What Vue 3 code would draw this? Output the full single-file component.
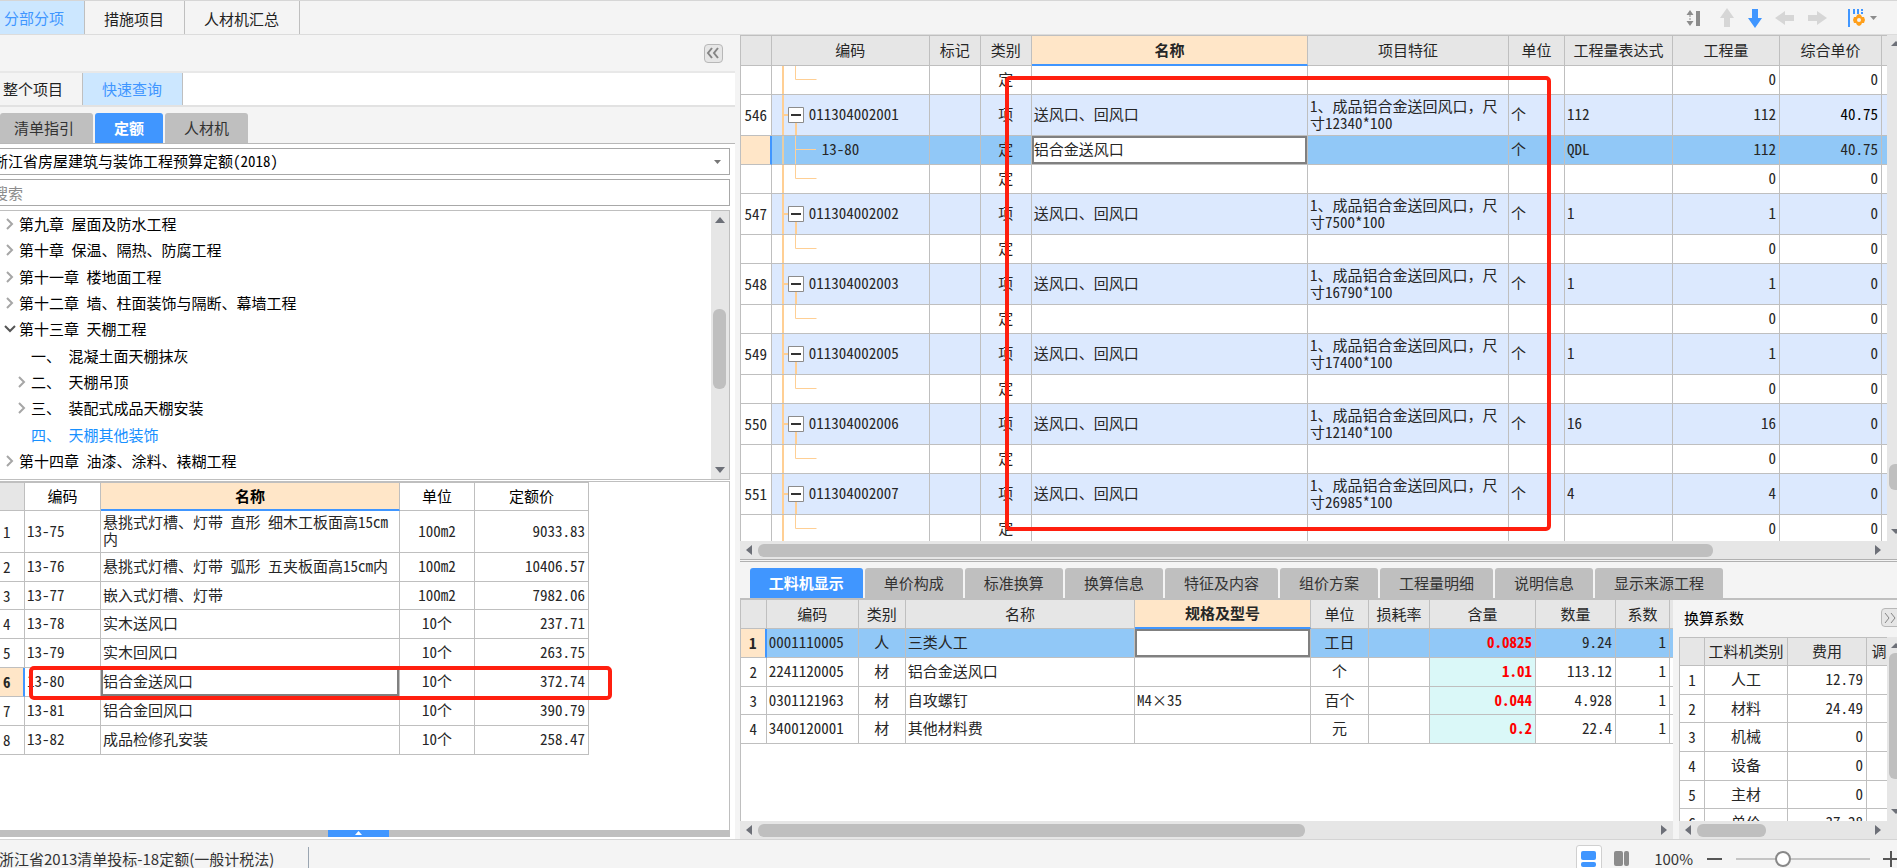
<script setup>
import { ref } from 'vue'

const mainTabs = ['分部分项', '措施项目', '人材机汇总']
const mainTab = ref(0)
const sideTabs = ['整个项目', '快速查询']
const sideTab = ref(1)
const queryTabs = ['清单指引', '定额', '人材机']
const queryTab = ref(1)
const detailTabs = ['工料机显示', '单价构成', '标准换算', '换算信息', '特征及内容', '组价方案', '工程量明细', '说明信息', '显示来源工程']
const detailTab = ref(0)
const keyword = ref('')
const zoom = ref(33)

const tree = [
  { text: '第九章 屋面及防水工程', level: 1, state: 'closed' },
  { text: '第十章 保温、隔热、防腐工程', level: 1, state: 'closed' },
  { text: '第十一章 楼地面工程', level: 1, state: 'closed' },
  { text: '第十二章 墙、柱面装饰与隔断、幕墙工程', level: 1, state: 'closed' },
  { text: '第十三章 天棚工程', level: 1, state: 'open' },
  { text: '一、 混凝土面天棚抹灰', level: 2, state: 'leaf' },
  { text: '二、 天棚吊顶', level: 2, state: 'closed' },
  { text: '三、 装配式成品天棚安装', level: 2, state: 'closed' },
  { text: '四、 天棚其他装饰', level: 2, state: 'leaf', active: true },
  { text: '第十四章 油漆、涂料、裱糊工程', level: 1, state: 'closed' }
]

const quota = [
  ['13-75', '悬挑式灯槽、灯带 直形 细木工板面高15cm内', '100m2', '9033.83'],
  ['13-76', '悬挑式灯槽、灯带 弧形 五夹板面高15cm内', '100m2', '10406.57'],
  ['13-77', '嵌入式灯槽、灯带', '100m2', '7982.06'],
  ['13-78', '实木送风口', '10个', '237.71'],
  ['13-79', '实木回风口', '10个', '263.75'],
  ['13-80', '铝合金送风口', '10个', '372.74'],
  ['13-81', '铝合金回风口', '10个', '390.79'],
  ['13-82', '成品检修孔安装', '10个', '258.47']
]

const item = (no, code, size, qty, price) => ({
  kind: 'item', no, code, type: '项', name: '送风口、回风口',
  feature: '1、成品铝合金送回风口，尺寸' + size, unit: '个', expr: qty, qty, price
})
const blank = () => ({ kind: 'last', type: '定', qty: '0', price: '0' })

const bill = [
  blank(),
  item('546', '011304002001', '12340*100', '112', '40.75'),
  { kind: 'child', code: '13-80', type: '定', name: '铝合金送风口', unit: '个', expr: 'QDL', qty: '112', price: '40.75' },
  blank(),
  item('547', '011304002002', '7500*100', '1', '0'),
  blank(),
  item('548', '011304002003', '16790*100', '1', '0'),
  blank(),
  item('549', '011304002005', '17400*100', '1', '0'),
  blank(),
  item('550', '011304002006', '12140*100', '16', '0'),
  blank(),
  item('551', '011304002007', '26985*100', '4', '0'),
  blank()
]

const resources = [
  ['0001110005', '人', '三类人工', '', '工日', '0.0825', '9.24'],
  ['2241120005', '材', '铝合金送风口', '', '个', '1.01', '113.12'],
  ['0301121963', '材', '自攻螺钉', 'M4×35', '百个', '0.044', '4.928'],
  ['3400120001', '材', '其他材料费', '', '元', '0.2', '22.4']
]

const factors = [
  ['人工', '12.79'], ['材料', '24.49'], ['机械', '0'],
  ['设备', '0'], ['主材', '0'], ['单价', '37.28']
]
</script>

<template>
  <div class="app">
    <header class="topbar">
      <nav class="strip">
        <button v-for="(t, i) in mainTabs" :key="t" type="button" class="strip-tab" :class="{ on: i === mainTab }" @click="mainTab = i">{{ t }}</button>
      </nav>
      <div class="tools">
        <button type="button" aria-label="行高"><svg width="16" height="18"><path d="M4 1 7.500 6H.5zM4 17 .5 12H7.500z" fill="#8c8c8c" /><path d="M4 6v6" stroke="#8c8c8c" stroke-width="1" stroke-dasharray="2 1" /><path d="M10 2h4v15h-4z" fill="#8c8c8c" /></svg></button>
        <button type="button" aria-label="上移"><svg width="16" height="20"><path d="M8 0 15 10h-4v9H5v-9H1z" fill="#d6d6d6" /></svg></button>
        <button type="button" aria-label="下移"><svg width="16" height="20"><path d="M8 20 1 10h4V1h6v9h4z" fill="#4096ff" /></svg></button>
        <button type="button" aria-label="左移"><svg width="20" height="16"><path d="M0 8 10 1v4h9v6h-9v4z" fill="#d6d6d6" /></svg></button>
        <button type="button" aria-label="右移"><svg width="20" height="16"><path d="M20 8 10 1v4H1v6h9v4z" fill="#d6d6d6" /></svg></button>
        <button type="button" aria-label="列设置" class="column-set">
          <svg width="18" height="20"><path d="M1 1h2v18H1zM6 1h2v5H6zM10 1h2v5h-2zM14 1h2v2h-2zM14 4h2v2h-2z" fill="#4096ff" /><path d="m12 6 2 1 1 2h2l1 3-1 3h-2l-1 2-2 1-2-1-1-2H7l-1-3 1-3h2l1-2z" fill="#ff9f1a" /><circle cx="12" cy="12" r="2" fill="#f4f4f4" /></svg>
          <svg width="8" height="6"><path d="M0 1h7L3.500 5z" fill="#8c8c8c" /></svg>
        </button>
      </div>
    </header>

    <main class="body">
      <aside class="side">
        <div class="side-head">
          <button type="button" class="fold" aria-label="收起">
            <svg width="16" height="16"><path d="M7 3 3 8l4 5M13 3 9 8l4 5" fill="none" stroke="#858585" stroke-width="2" /></svg>
          </button>
        </div>
        <nav class="strip side-strip">
          <button v-for="(t, i) in sideTabs" :key="t" type="button" class="strip-tab" :class="{ on: i === sideTab }" @click="sideTab = i">{{ t }}</button>
        </nav>
        <nav class="pills query">
          <button v-for="(t, i) in queryTabs" :key="t" type="button" class="pill" :class="{ on: i === queryTab }" @click="queryTab = i">{{ t }}</button>
        </nav>
        <div class="side-body">
          <div class="combo">
            <select aria-label="定额库"><option>浙江省房屋建筑与装饰工程预算定额(2018)</option></select>
            <svg width="8" height="6"><path d="M0 1h7L3.500 5z" fill="#777" /></svg>
          </div>
          <input v-model="keyword" class="search" type="text" placeholder="搜索" aria-label="搜索">
          <div class="tree">
            <ul>
              <li v-for="n in tree" :key="n.text">
                <button type="button" :class="['node', 'level-' + n.level, { active: n.active }]">
                  <svg width="12" height="12">
                    <path v-if="n.state === 'closed'" d="m3 1 5 5-5 5" fill="none" stroke="#a6a6a6" stroke-width="2" />
                    <path v-if="n.state === 'open'" d="m1 3 5 5 5-5" fill="none" stroke="#555" stroke-width="2" />
                  </svg>{{ n.text }}
                </button>
              </li>
            </ul>
            <div class="vbar tree-bar">
              <svg width="18" height="18"><path d="M4 12h10L9 6z" fill="#6d7078" /></svg>
              <i class="grow-10"></i><b class="tree-thumb"></b><i class="grow-9"></i>
              <svg width="18" height="18"><path d="M4 6h10L9 12z" fill="#6d7078" /></svg>
            </div>
          </div>
          <div class="quota">
            <table class="grid quota-grid">
              <colgroup><col class="w25"><col class="w76"><col><col class="w75"><col class="w114"></colgroup>
              <thead><tr><th class="corner"></th><th>编码</th><th class="current">名称</th><th>单位</th><th>定额价</th></tr></thead>
              <tbody>
                <tr v-for="(r, i) in quota" :key="r[0]" :class="{ tall: i === 0, short: i === 2 }">
                  <th class="no" :class="{ now: i === 5 }">{{ i + 1 }}</th>
                  <td>{{ r[0] }}</td>
                  <td :class="{ focus: i === 5 }">{{ r[1] }}</td>
                  <td class="mid">{{ r[2] }}</td>
                  <td class="num">{{ r[3] }}</td>
                </tr>
              </tbody>
            </table>
            <div class="mark quota-mark"></div>
          </div>
          <div class="drawer"><button type="button" aria-label="展开"><svg width="8" height="5"><path d="M0 4h7L3.500 0z" fill="#fff" /></svg></button></div>
        </div>
      </aside>

      <section class="work">
        <div class="bill">
          <div class="bill-view">
            <table class="grid bill-grid">
              <colgroup><col class="w31"><col class="w158"><col class="w51"><col class="w51"><col><col class="w201"><col class="w56"><col class="w108"><col class="w107"><col class="w102"><col class="w5"></colgroup>
              <thead>
                <tr><th></th><th>编码</th><th>标记</th><th>类别</th><th class="current">名称</th><th>项目特征</th><th>单位</th><th>工程量表达式</th><th>工程量</th><th>综合单价</th><th class="cut"></th></tr>
              </thead>
              <tbody>
                <tr v-for="(r, i) in bill" :key="i" :class="r.kind">
                  <th class="no" :class="{ now: r.kind === 'child' }">{{ r.no }}</th>
                  <td class="code">
                    <div>
                      <svg v-if="r.kind === 'item'" width="37" height="40">
                        <path d="M11 0v40M11 20h5M24 28v12" fill="none" stroke="#ffcf94" stroke-width="2" />
                        <path d="M16.500 12.500h15v15h-15z" fill="#fff" stroke="#8c8c8c" /><path d="M19 20h10" stroke="#333" stroke-width="2" />
                      </svg>
                      <svg v-else-if="r.kind === 'child'" width="50" height="28"><path d="M11 0v28" stroke="#e6cda6" stroke-width="2" /><path d="M23.500 0v28M23 13.500h21" fill="none" stroke="#ffd199" /></svg>
                      <svg v-else width="50" height="28"><path d="M11 0v28" stroke="#ffcf94" stroke-width="2" /><path d="M23.500 0v13.500h21" fill="none" stroke="#ffcf94" /></svg>
                      <span>{{ r.code }}</span>
                    </div>
                  </td>
                  <td></td>
                  <td class="mid">{{ r.type }}</td>
                  <td :class="{ focus: r.kind === 'child' }">{{ r.name }}</td>
                  <td>{{ r.feature }}</td>
                  <td>{{ r.unit }}</td>
                  <td>{{ r.expr }}</td>
                  <td class="num">{{ r.qty }}</td>
                  <td class="num" :class="{ strong: r.kind === 'item' && r.price !== '0' }">{{ r.price }}</td>
                  <td class="cut"></td>
                </tr>
              </tbody>
            </table>
            <div class="mark bill-mark"></div>
          </div>
          <div class="vbar edge-bar">
            <svg width="18" height="18"><path d="M4 11h10L9 6z" fill="#6d7078" /></svg>
            <i class="grow-25"></i><b class="bill-thumb"></b><i class="grow-2"></i>
            <svg width="18" height="18"><path d="M4 6h10L9 11z" fill="#6d7078" /></svg>
          </div>
        </div>
        <div class="hbar inset">
          <svg width="18" height="18"><path d="M12 4v10L6 9z" fill="#6d7078" /></svg>
          <div class="rail"><b class="bill-slide"></b></div>
          <svg width="18" height="18"><path d="M6 4v10l6-5z" fill="#6d7078" /></svg>
        </div>
        <nav class="pills detail">
          <button v-for="(t, i) in detailTabs" :key="t" type="button" class="pill" :class="{ on: i === detailTab }" @click="detailTab = i">{{ t }}</button>
        </nav>
        <div class="lower">
          <div class="res">
            <div class="res-view">
              <table class="grid res-grid">
                <colgroup><col class="w26"><col class="w92"><col class="w47"><col><col class="w176"><col class="w58"><col class="w61"><col class="w106"><col class="w80"><col class="w54"><col class="w3"></colgroup>
                <thead>
                  <tr><th></th><th>编码</th><th>类别</th><th>名称</th><th class="current">规格及型号</th><th>单位</th><th>损耗率</th><th>含量</th><th>数量</th><th>系数</th><th class="cut"></th></tr>
                </thead>
                <tbody>
                  <tr v-for="(r, i) in resources" :key="r[0]" :class="{ child: i === 0, short: i === 2 }">
                    <th class="no" :class="{ now: i === 0 }">{{ i + 1 }}</th>
                    <td>{{ r[0] }}</td>
                    <td class="mid">{{ r[1] }}</td>
                    <td>{{ r[2] }}</td>
                    <td :class="{ focus: i === 0 }">{{ r[3] }}</td>
                    <td class="mid">{{ r[4] }}</td>
                    <td></td>
                    <td class="num amount">{{ r[5] }}</td>
                    <td class="num">{{ r[6] }}</td>
                    <td class="num">1</td>
                    <td class="cut"></td>
                  </tr>
                </tbody>
              </table>
            </div>
            <div class="hbar">
              <svg width="18" height="18"><path d="M12 4v10L6 9z" fill="#6d7078" /></svg>
              <div class="rail"><b class="res-slide"></b></div>
              <svg width="18" height="18"><path d="M6 4v10l6-5z" fill="#6d7078" /></svg>
            </div>
          </div>
          <div class="factor">
            <div class="factor-head">
              <h2>换算系数</h2>
              <button type="button" class="fold" aria-label="展开"><svg width="16" height="16"><path d="m3 3 4 5-4 5M9 3l4 5-4 5" fill="none" stroke="#858585" stroke-width="1" /></svg></button>
            </div>
            <div class="factor-view">
              <table class="grid factor-grid">
                <colgroup><col class="w25"><col class="w83"><col class="w79"><col class="w40"></colgroup>
                <thead><tr><th></th><th>工料机类别</th><th>费用</th><th>调整</th></tr></thead>
                <tbody>
                  <tr v-for="(r, i) in factors" :key="r[0]" :class="{ short: i === 1 || i === 4 }">
                    <th class="no">{{ i + 1 }}</th><td class="mid">{{ r[0] }}</td><td class="num">{{ r[1] }}</td><td></td>
                  </tr>
                </tbody>
              </table>
              <div class="vbar edge-bar">
                <svg width="18" height="16"><path d="M4 11h10L9 6z" fill="#6d7078" /></svg>
                <b class="factor-thumb"></b><i class="grow-2"></i>
                <svg width="18" height="18"><path d="M4 6h10L9 11z" fill="#6d7078" /></svg>
              </div>
            </div>
            <div class="hbar inset">
              <svg width="18" height="18"><path d="M12 4v10L6 9z" fill="#6d7078" /></svg>
              <div class="rail"><b class="factor-slide"></b></div>
              <svg width="18" height="18"><path d="M6 4v10l6-5z" fill="#6d7078" /></svg>
            </div>
          </div>
        </div>
      </section>
    </main>

    <footer class="status">
      <span class="project">浙江省2013清单投标-18定额(一般计税法)</span>
      <div class="views">
        <button type="button" class="view on" aria-label="上下布局"><svg width="16" height="17"><rect width="15" height="9" rx="2" fill="#4096ff" /><rect y="11" width="15" height="5" rx="2" fill="#4096ff" /></svg></button>
        <button type="button" class="view" aria-label="左右布局"><svg width="16" height="16"><rect width="9" height="15" rx="2" fill="#8c8c8c" /><rect x="10" width="5" height="15" rx="2" fill="#8c8c8c" /></svg></button>
        <label for="zoom">100%</label>
        <button type="button" class="step" aria-label="缩小"><svg width="16" height="16"><path d="M0 8h15" stroke="#555" stroke-width="2" /></svg></button>
        <input id="zoom" v-model="zoom" type="range" min="0" max="100">
        <button type="button" class="step" aria-label="放大"><svg width="16" height="16"><path d="M0 8h16M8 0v16" stroke="#555" stroke-width="2" /></svg></button>
      </div>
    </footer>
  </div>
</template>

<style>
body { margin: 0; overflow: hidden; }
</style>

<style scoped>
* { box-sizing: border-box; }
.app {
  display: flex; flex-direction: column; height: 100vh; overflow: hidden;
  background: #f4f4f4; color: #222;
  font: 15px/18px "Noto Sans CJK SC", sans-serif;
}
button, input, select { font: inherit; color: inherit; margin: 0; }
button { border: 0; background: none; padding: 0; white-space: nowrap; }
svg { display: block; flex: none; }

.topbar { flex: none; display: flex; justify-content: space-between; height: 35px; border-top: 1px solid #d6d6d6; border-bottom: 1px solid #dcdcdc; }
.strip { display: flex; }
.strip-tab { padding: 2px 20px 0 19px; border-right: 1px solid #bfbfbf; background: #f4f4f4; }
.strip-tab:first-child { padding-left: 4px; }
.strip-tab.on { background: #cce7ff; color: #4096ff; padding-top: 0; }
.tools { display: flex; align-items: center; padding: 0 19px 0 0; gap: 12px; }
.tools button { display: flex; align-items: center; }
.tools button:first-child { margin-right: 5px; }
.tools .column-set { gap: 5px; margin-left: 8px; }

.body { flex: 1; min-height: 0; display: flex; }
.side { flex: 0 0 39%; min-width: 0; display: flex; flex-direction: column; overflow: hidden; padding-right: 5px; }
.side-head { flex: none; height: 38px; display: flex; justify-content: flex-end; align-items: center; padding-right: 12px; border-bottom: 2px solid #e8e8e8; }
.fold { flex: none; width: 19px; height: 19px; border: 1px solid #b8b8b8; border-radius: 4px; background: #e6e6e6; display: flex; align-items: center; justify-content: center; }
.side-strip { flex: none; height: 34px; background: #fff; border-bottom: 2px solid #e2e2e2; }
.side-strip .strip-tab { padding-top: 0; }
.side-strip .strip-tab:first-child { padding-left: 3px; padding-right: 19px; }

.pills { flex: none; display: flex; align-items: flex-end; gap: 2px; }
.pill { height: 30px; padding: 0 19px 1px; border-radius: 3px 3px 0 0; background: #bfbfbf; color: #333; }
.pill.on { background: #4096ff; color: #fff; font-weight: 700; }
.query { height: 37px; border-bottom: 1px solid #b8b8b8; }
.query .pill:first-child { padding-left: 14px; }

.side-body { flex: 1; min-height: 0; display: flex; flex-direction: column; background: #fff; padding: 4px 5px 0 0; }
.combo { flex: none; display: flex; align-items: center; height: 27px; margin-left: -12px; border: 1px solid #a8a8a8; padding: 0 7px 0 4px; color: #000; font-family: "Noto Sans Mono CJK SC", "Noto Sans CJK SC", monospace; }
.combo select { flex: 1; min-width: 0; border: 0; padding: 0 0 2px; background: none; appearance: none; }
.search { flex: none; height: 27px; margin: 4px 0 4px -12px; border: 1px solid #a8a8a8; padding: 0 4px; border-radius: 0; background: #fff; }
.search::placeholder { color: #8c8c8c; opacity: 1; }
.tree { flex: none; display: flex; height: 270px; border: 1px solid #bfbfbf; border-left: 0; color: #000; font-family: "Noto Sans Mono CJK SC", "Noto Sans CJK SC", monospace; }
.tree ul { flex: 1; margin: 0; padding: 0 0 5px; list-style: none; display: flex; flex-direction: column; }
.tree li { flex: 1; display: flex; }
.node { display: flex; align-items: center; gap: 3px; padding-left: 4px; }
.level-2 { padding-left: 16px; }
.node.active { color: #1890ff; }

.vbar { flex: none; display: flex; flex-direction: column; align-items: flex-start; background: #e6e6e6; overflow: hidden; }
.vbar b { flex: none; width: 13px; margin-left: 2px; border-radius: 6px; background: #bfbfbf; }
.tree-bar { width: 18px; }
.edge-bar { width: 10px; }
.tree-thumb { height: 80px; }
.bill-thumb { height: 26px; }
.factor-thumb { height: 126px; }
.grow-2 { flex: 2; }
.grow-9 { flex: 9; }
.grow-10 { flex: 10; }
.grow-25 { flex: 25; }
.hbar { flex: none; display: flex; height: 18px; background: #e6e6e6; }
.hbar.inset { padding-right: 10px; }
.rail { flex: 1; display: flex; align-items: center; }
.rail b { height: 13px; border-radius: 6px; background: #bfbfbf; }
.bill-slide { width: 86%; }
.res-slide { width: 61%; }
.factor-slide { width: 40%; }

.grid { width: 100%; table-layout: fixed; border-collapse: separate; border-spacing: 0; font-family: "Noto Sans Mono CJK SC", "Noto Sans CJK SC", monospace; line-height: 17px; color: #262626; }
.grid th, .grid td { height: 29px; padding: 0 2px 3px; border-right: 1px solid #bfbfbf; border-bottom: 1px solid #bfbfbf; }
.grid td { text-align: left; background: #fff; overflow: hidden; word-break: break-all; }
.grid th { font-weight: 400; white-space: nowrap; overflow: hidden; background: #e6e6e6; }
.grid thead th { border-top: 1px solid #bfbfbf; padding-bottom: 2px; font-family: "Noto Sans CJK SC", sans-serif; }
.grid thead th.current { background: #ffe6c8; font-weight: 700; border-bottom: 2px solid #4096ff; }
.grid .no { background: #fff; padding: 0 0 1px; }
.grid .no.now { background: #ffe6c8; font-weight: 700; border-right: 2px solid #4096ff; }
.grid .mid { text-align: center; }
.grid .num { text-align: right; padding-right: 3px; }
.grid .cut { border-right: 0; padding: 0; }
.grid .item td { height: 41px; background: #dce9fe; }
.grid .child td { background: #91c8f7; }
.grid .short td, .grid .short th { height: 28px; }
.grid td.focus, .grid .child td.focus { background: #fff; box-shadow: inset 0 0 0 2px #808080; }
.grid .tall td { height: 42px; }
.grid .strong { color: #000; }

.quota { flex: 1; min-height: 0; position: relative; margin-top: 1px; border-right: 1px solid #bfbfbf; border-top: 1px solid #bfbfbf; overflow: hidden; }
.quota-grid { width: 589px; }
.quota-grid thead th { background: #fff; color: #000; }
.quota-grid thead th.corner { background: #e6e6e6; }
.quota-grid .no { text-align: left; padding-left: 3px; }
.mark { position: absolute; border: 4px solid #ff1f0f; border-radius: 5px; pointer-events: none; }
.quota-mark { left: 29px; top: 184px; width: 583px; height: 34px; }
.drawer { flex: none; display: flex; justify-content: center; height: 9px; margin-left: -12px; background: #bfbfbf; border-bottom: 2px solid #fff; }
.drawer button { width: 61px; display: flex; align-items: center; justify-content: center; background: #4096ff; }

.work { flex: 1; min-width: 0; display: flex; flex-direction: column; }
.bill { flex: 1; min-height: 0; display: flex; overflow: hidden; border-left: 1px solid #bfbfbf; }
.bill-view { flex: 1; min-width: 0; position: relative; overflow: hidden; background: #fff; }
.bill-grid thead th { height: 31px; }
.code div { display: flex; align-items: center; }
.code span { padding-bottom: 3px; }
.grid .code { padding: 0; }
.bill-mark { left: 264px; right: 336px; top: 41px; bottom: 10px; }
.detail { height: 41px; padding-left: 10px; border-top: 3px double #b0b0b0; border-bottom: 2px solid #bfbfbf; }
.lower { flex: none; display: flex; height: 239px; }
.res { flex: 1; min-width: 0; display: flex; flex-direction: column; background: #fff; }
.res-view { flex: 1; min-height: 0; overflow: hidden; border-left: 1px solid #bfbfbf; }
.res-grid thead th, .res-grid thead th.current { border-top: 0; }
.grid .amount { color: #f00; font-weight: 700; }
.grid tr:not(.child) .amount { background: #daf8f8; }
.factor { flex: none; width: 224px; padding-left: 6px; display: flex; flex-direction: column; overflow: hidden; }
.factor-head { flex: none; height: 37px; display: flex; align-items: center; justify-content: space-between; padding: 0 0 2px 5px; overflow: hidden; }
.factor-head h2 { margin: 0; font: inherit; color: #000; }
.factor-head .fold { width: 24px; margin-right: -8px; justify-content: flex-start; }
.factor-view { flex: 1; min-height: 0; display: flex; justify-content: space-between; overflow: hidden; background: #fff; border-left: 1px solid #bfbfbf; }
.factor-grid { flex: 0 0 227px; align-self: flex-start; margin-right: -20px; }
.factor-view .edge-bar { position: relative; }

.w3 { width: 3px; } .w5 { width: 5px; } .w25 { width: 25px; } .w26 { width: 26px; } .w31 { width: 31px; }
.w40 { width: 40px; } .w47 { width: 47px; } .w51 { width: 51px; } .w54 { width: 54px; } .w56 { width: 56px; }
.w58 { width: 58px; } .w61 { width: 61px; } .w75 { width: 75px; } .w76 { width: 76px; } .w79 { width: 79px; }
.w80 { width: 80px; } .w83 { width: 83px; } .w92 { width: 92px; } .w102 { width: 102px; } .w106 { width: 106px; }
.w107 { width: 107px; } .w108 { width: 108px; } .w114 { width: 114px; }
.w158 { width: 158px; } .w176 { width: 176px; } .w201 { width: 201px; }

.status { flex: none; display: flex; justify-content: space-between; align-items: flex-start; height: 29px; overflow: hidden; border-top: 1px solid #d4d4d4; color: #333; }
.project { margin: 7px 0 0 -1px; padding: 3px 34px 10px 0; border-right: 1px solid #9aa5b1; }
.views { display: flex; align-items: center; height: 38px; }
.view { width: 26px; height: 28px; margin-right: 7px; display: flex; align-items: center; justify-content: center; border: 1px solid transparent; border-radius: 3px; }
.view.on { background: #fff; border-color: #d0d0d0; }
.views label { margin: 0 14px 0 12px; }
.views input { appearance: none; width: 134px; height: 16px; margin: 0 13px; background: linear-gradient(#c4c4c4, #c4c4c4) center / 100% 2px no-repeat; }
.views input::-webkit-slider-thumb { appearance: none; width: 16px; height: 16px; border: 2px solid #888; border-radius: 50%; background: #fff; }
.step { width: 16px; }
.step:last-child { width: 14px; overflow: hidden; }
</style>
